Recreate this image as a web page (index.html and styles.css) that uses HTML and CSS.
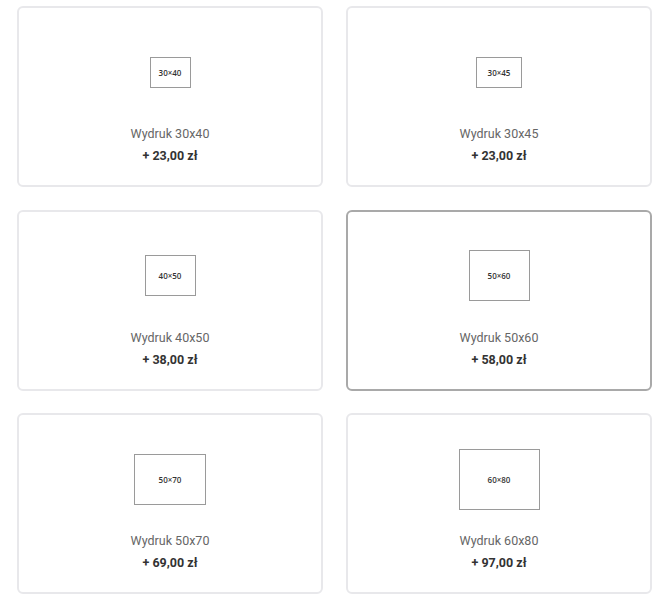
FILE: index.html
```html
<!DOCTYPE html>
<html lang="pl">

<head>
  <meta charset="UTF-8">
  <meta name="viewport" content="width=device-width, initial-scale=1.0">
  <title>Wydruki</title>
  <link rel="stylesheet" href="styles.css">
</head>

<body>
  <div class="print-grid">
    <div class="print-card">
      <div class="preview">
        <div class="frame frame-30x40">30×40</div>
      </div>
      <div class="print-name">Wydruk 30x40</div>
      <div class="print-price">+ 23,00 zł</div>
    </div>
    <div class="print-card">
      <div class="preview">
        <div class="frame frame-30x45">30×45</div>
      </div>
      <div class="print-name">Wydruk 30x45</div>
      <div class="print-price">+ 23,00 zł</div>
    </div>
    <div class="print-card">
      <div class="preview">
        <div class="frame frame-40x50">40×50</div>
      </div>
      <div class="print-name">Wydruk 40x50</div>
      <div class="print-price">+ 38,00 zł</div>
    </div>
    <div class="print-card selected">
      <div class="preview">
        <div class="frame frame-50x60">50×60</div>
      </div>
      <div class="print-name">Wydruk 50x60</div>
      <div class="print-price">+ 58,00 zł</div>
    </div>
    <div class="print-card">
      <div class="preview">
        <div class="frame frame-50x70">50×70</div>
      </div>
      <div class="print-name">Wydruk 50x70</div>
      <div class="print-price">+ 69,00 zł</div>
    </div>
    <div class="print-card">
      <div class="preview">
        <div class="frame frame-60x80">60×80</div>
      </div>
      <div class="print-name">Wydruk 60x80</div>
      <div class="print-price">+ 97,00 zł</div>
    </div>
  </div>
</body>

</html>
```

FILE: styles.css
```css
* {
  box-sizing: border-box;
}

body {
  font-family: Roboto, "Liberation Sans", Arial, sans-serif;
  background: #fff;
  margin: 0;
  padding: 6px 18px 0 17px;
}

.print-grid {
  display: grid;
  grid-template-columns: 1fr 1fr;
  grid-auto-rows: 181px;
  column-gap: 23px;
  row-gap: 22.5px;
}

.print-card {
  border: 2px solid #e8e8eb;
  border-radius: 6px;
  padding: 22px 10px 0;
  text-align: center;
  background: #fff;
}

.print-card.selected {
  border-color: #a9a9a9;
}

.preview {
  height: 84px;
  display: flex;
  justify-content: center;
  align-items: center;
}

.frame {
  border: 1px solid #9a9a9a;
  display: flex;
  justify-content: center;
  align-items: center;
  font-family: "Open Sans", sans-serif;
  font-size: 8px;
  font-weight: 600;
  color: #333;
}

.frame-30x40 { width: 41px; height: 31px; }
.frame-30x45 { width: 46px; height: 31px; }
.frame-40x50 { width: 51px; height: 41px; }
.frame-50x60 { width: 61px; height: 51px; }
.frame-50x70 { width: 72px; height: 51px; }
.frame-60x80 { width: 81px; height: 61px; }

.print-name {
  margin-top: 10px;
  line-height: 20px;
  font-size: 12.5px;
  color: #666;
}

.print-price {
  margin-top: 2px;
  line-height: 20px;
  font-size: 12.5px;
  font-weight: 700;
  color: #333;
}
```
